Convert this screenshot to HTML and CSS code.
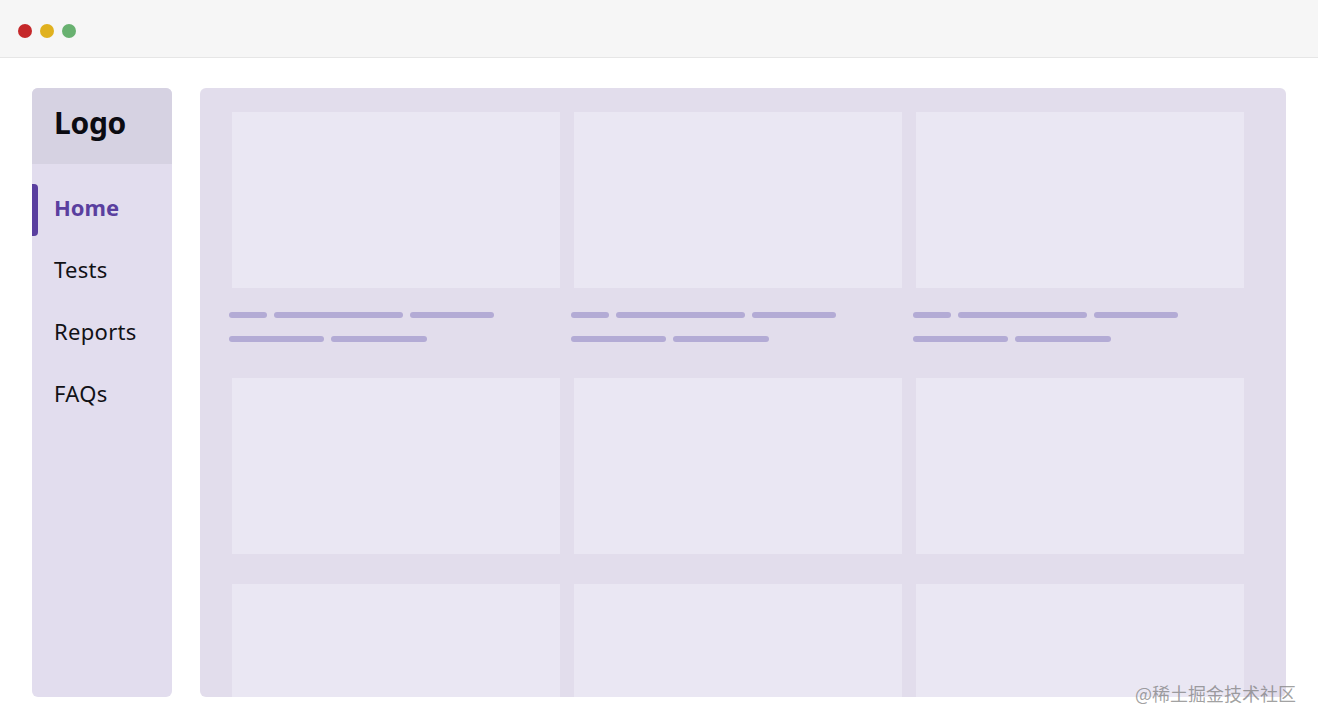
FILE: index.html
```html
<!DOCTYPE html>
<html lang="en">
<head>
<meta charset="utf-8">
<title>Layout</title>
<link rel="stylesheet" href="styles.css">
</head>
<body>
<header class="titlebar">
  <span class="dot dot-red"></span>
  <span class="dot dot-yellow"></span>
  <span class="dot dot-green"></span>
</header>
<div class="page">
  <aside class="sidebar">
    <div class="logo">Logo</div>
    <nav class="nav">
      <a class="nav-item active">Home</a>
      <a class="nav-item">Tests</a>
      <a class="nav-item">Reports</a>
      <a class="nav-item">FAQs</a>
    </nav>
  </aside>
  <main class="main">
    <div class="grid">
      <div class="item">
        <div class="thumb"></div>
        <div class="text">
          <div class="line"><span class="bar w38"></span><span class="bar w129"></span><span class="bar w84"></span></div>
          <div class="line"><span class="bar w95"></span><span class="bar w96"></span></div>
        </div>
      </div>
      <div class="item">
        <div class="thumb"></div>
        <div class="text">
          <div class="line"><span class="bar w38"></span><span class="bar w129"></span><span class="bar w84"></span></div>
          <div class="line"><span class="bar w95"></span><span class="bar w96"></span></div>
        </div>
      </div>
      <div class="item">
        <div class="thumb"></div>
        <div class="text">
          <div class="line"><span class="bar w38"></span><span class="bar w129"></span><span class="bar w84"></span></div>
          <div class="line"><span class="bar w95"></span><span class="bar w96"></span></div>
        </div>
      </div>
      <div class="item"><div class="thumb"></div></div>
      <div class="item"><div class="thumb"></div></div>
      <div class="item"><div class="thumb"></div></div>
      <div class="item"><div class="thumb"></div></div>
      <div class="item"><div class="thumb"></div></div>
      <div class="item"><div class="thumb"></div></div>
    </div>
  </main>
</div>
<div class="watermark">@稀土掘金技术社区</div>
</body>
</html>
```

FILE: styles.css
```css
* { box-sizing: border-box; }
html, body { margin: 0; padding: 0; }
body {
  width: 1318px;
  height: 726px;
  overflow: hidden;
  background: #ffffff;
  font-family: "Noto Sans", "Open Sans", sans-serif;
  position: relative;
}
.titlebar {
  height: 58px;
  background: #f6f6f6;
  border-bottom: 1px solid #e6e6e6;
  display: flex;
  align-items: center;
  gap: 8px;
  padding: 0 0 0 18px;
}
.dot {
  width: 14px;
  height: 14px;
  border-radius: 50%;
  display: block;
  margin-top: 4px;
}
.dot-red { background: #c5282a; }
.dot-yellow { background: #e0b11f; }
.dot-green { background: #68b170; }

.page {
  display: flex;
  gap: 28px;
  padding: 30px 32px 29px 32px;
  height: 668px;
}
.sidebar {
  width: 140px;
  background: #e2ddee;
  border-radius: 6px;
  overflow: hidden;
  display: flex;
  flex-direction: column;
}
.logo {
  height: 76px;
  background: #d6d2e2;
  padding-left: 22px;
  padding-bottom: 7px;
  display: flex;
  align-items: center;
  font-size: 30px;
  font-weight: 700;
  color: #0b0b12;
  letter-spacing: -0.3px;
}
.nav {
  display: flex;
  flex-direction: column;
  gap: 10px;
  padding-top: 20px;
}
.nav-item {
  height: 52px;
  display: flex;
  align-items: center;
  padding-left: 22px;
  padding-bottom: 6px;
  font-size: 22px;
  letter-spacing: 0.3px;
  color: #111116;
  position: relative;
}
.nav-item.active {
  color: #5a3f9f;
  font-weight: 700;
  letter-spacing: 0;
}
.nav-item.active::before {
  content: "";
  position: absolute;
  left: 0;
  top: 0;
  width: 6px;
  height: 52px;
  background: #5a3f9f;
  border-radius: 0 4px 4px 0;
}
.main {
  flex: 1;
  background: #e2ddec;
  border-radius: 6px;
  overflow: hidden;
  padding: 24px 0 0 32px;
}
.grid {
  display: grid;
  grid-template-columns: 328px 328px 328px;
  column-gap: 14px;
  row-gap: 30px;
  align-items: start;
}
.thumb {
  height: 176px;
  background: #eae7f3;
}
.text {
  height: 60px;
  padding-top: 24px;
  margin-left: -3px;
  display: flex;
  flex-direction: column;
  gap: 18px;
}
.line {
  display: flex;
  gap: 7px;
}
.bar {
  height: 6px;
  border-radius: 3px;
  background: #b3abd5;
  display: block;
}
.w38 { width: 38px; }
.w129 { width: 129px; }
.w84 { width: 84px; }
.w95 { width: 95px; }
.w96 { width: 96px; }

.watermark {
  position: absolute;
  left: 1135px;
  top: 680px;
  font-family: "Noto Sans CJK SC", "Noto Sans", sans-serif;
  font-size: 18px;
  color: rgba(120, 120, 120, 0.7);
}
```
